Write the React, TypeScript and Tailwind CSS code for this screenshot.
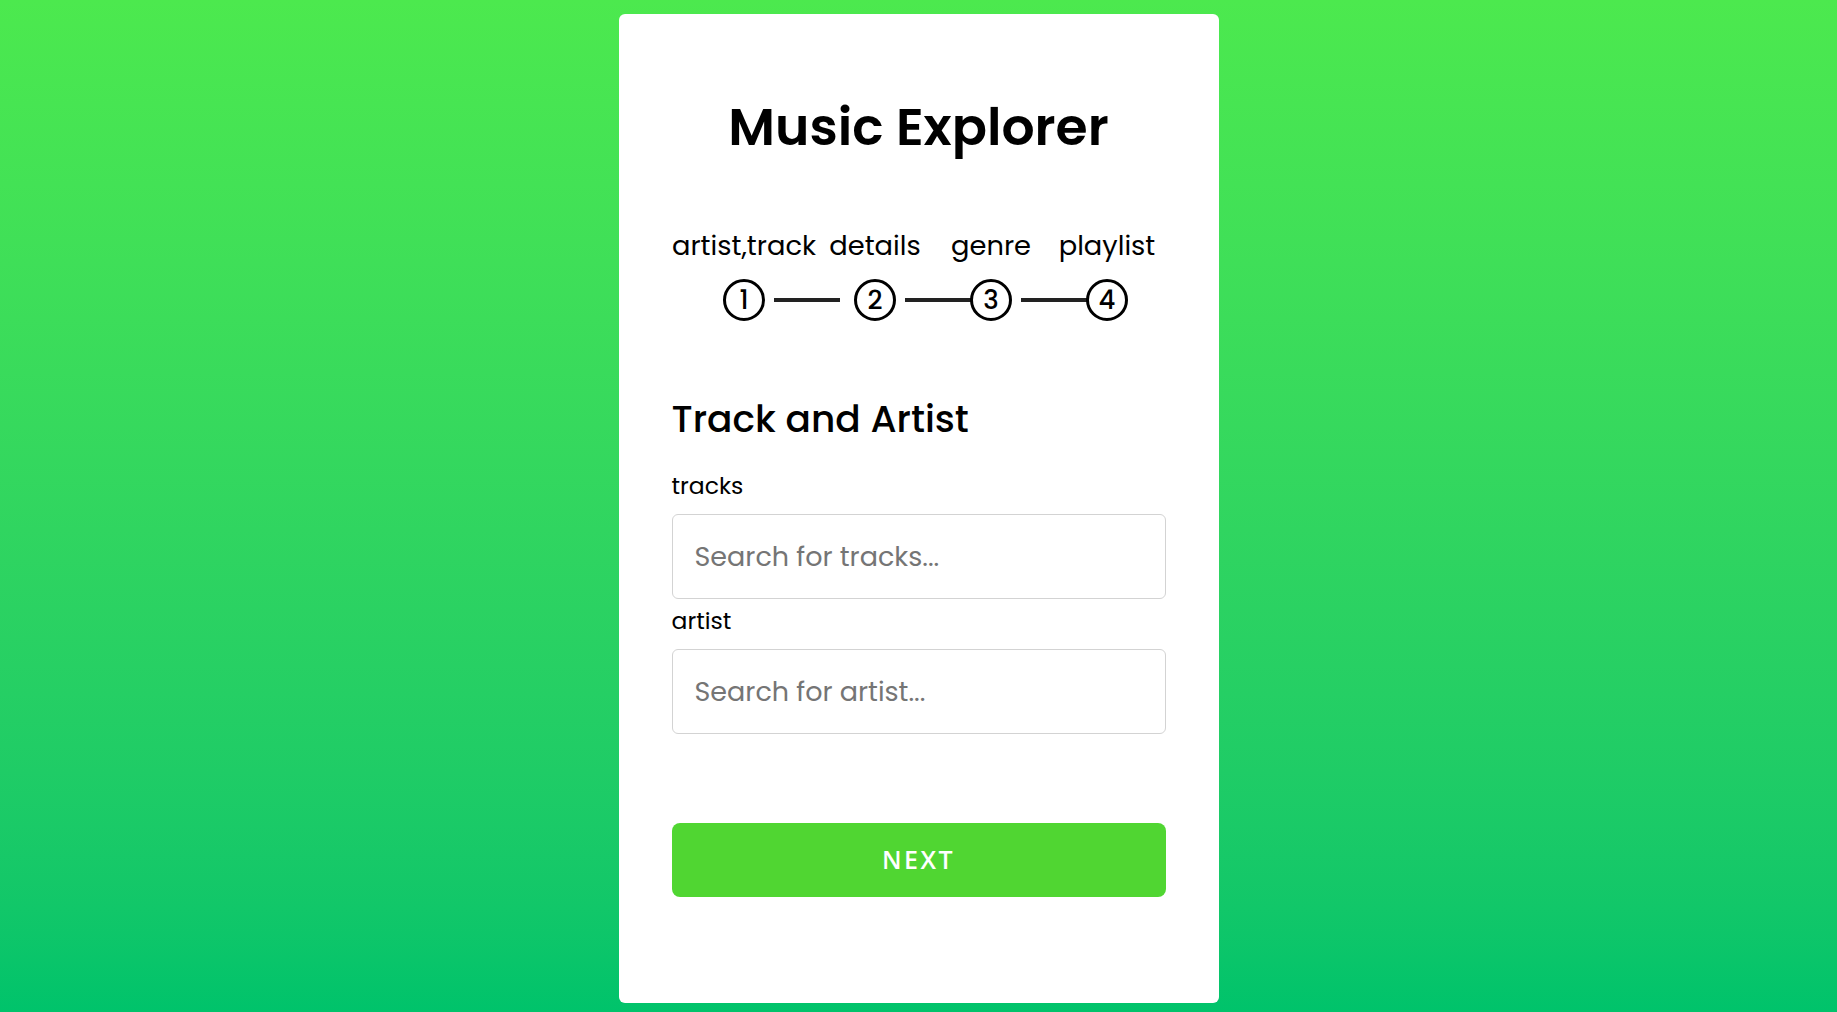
export default function App() {
  const steps = ['artist,track', 'details', 'genre', 'playlist']

  return (
    <div className="min-h-screen w-full bg-gradient-to-b from-[#4ce94e] to-[#00c36b] flex justify-center pt-[14px] pb-[10px] font-['Poppins','Inter',sans-serif] text-black">
      <div className="w-[600px] bg-white rounded-[6px] px-[53px] pt-[79px] pb-[106px]">
        <h1 className="text-center text-[52px] leading-[67px] font-semibold">Music Explorer</h1>

        <div className="mt-[68px] flex items-end justify-center pl-[14px]">
          <Step n={1} label={steps[0]} />
          <div className="ml-[9px] mr-[14px] mb-[19px] w-[66px] h-[4px] bg-[#222]"></div>
          <Step n={2} label={steps[1]} />
          <div className="ml-[9px] -mr-[1px] mb-[19px] w-[66px] h-[4px] bg-[#222]"></div>
          <Step n={3} label={steps[2]} />
          <div className="ml-[9px] -mr-[1px] mb-[19px] w-[66px] h-[4px] bg-[#222]"></div>
          <Step n={4} label={steps[3]} />
        </div>

        <h2 className="mt-[78px] text-[37.5px] leading-[41px] font-medium">Track and Artist</h2>

        <label className="block mt-[31px] text-[23.5px] leading-[30px]">tracks</label>
        <input
          className="mt-[13px] block w-full h-[85px] border border-[#d3d3d3] rounded-[6px] px-[22px] text-[27px] placeholder:text-[#757575] outline-none"
          placeholder="Search for tracks..."
        />
        <label className="block mt-[7px] text-[23.5px] leading-[30px]">artist</label>
        <input
          className="mt-[13px] block w-full h-[85px] border border-[#d3d3d3] rounded-[6px] px-[22px] text-[27px] placeholder:text-[#757575] outline-none"
          placeholder="Search for artist..."
        />

        <button className="mt-[89px] w-full h-[74px] rounded-[8px] bg-[#50d632] text-white text-[25px] font-semibold tracking-[2.5px] font-['Open_Sans',sans-serif]">
          NEXT
        </button>
      </div>
    </div>
  )
}

function Step({ n, label }: { n: number; label: string }) {
  return (
    <div className="w-[42px] flex flex-col items-center">
      <span className="whitespace-nowrap text-[27.3px] leading-[36px]">{label}</span>
      <div className="mt-[15px] w-[42px] h-[42px] rounded-full border-[3px] border-black flex items-center justify-center text-[26px] leading-none font-medium">
        {n}
      </div>
    </div>
  )
}
